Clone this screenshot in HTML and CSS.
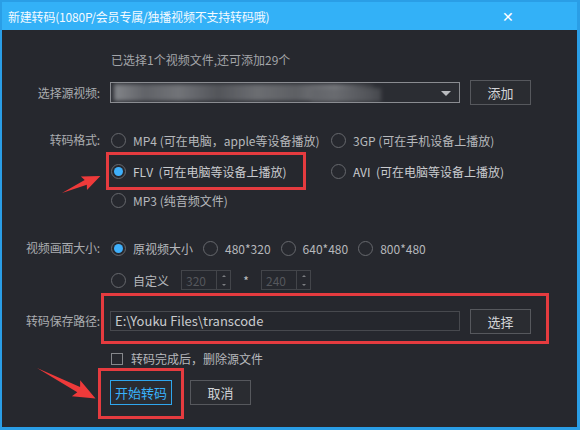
FILE: index.html
```html
<!DOCTYPE html>
<html lang="zh-CN">
<head>
<meta charset="utf-8">
<title>新建转码</title>
<link rel="stylesheet" href="styles.css">
</head>
<body>
<div class="window">
  <div class="titlebar">
    <span class="title">新建转码(1080P/会员专属/独播视频不支持转码哦)</span>
    <span class="close">✕</span>
  </div>
  <div class="content">
    <div class="info">已选择1个视频文件,还可添加29个</div>

    <div class="row row-source">
      <div class="label">选择源视频:</div>
      <div class="ctrl">
        <div class="select">
          <div class="blur"></div>
          <div class="blur blur2"></div>
          <span class="caret"></span>
        </div>
        <div class="btn">添加</div>
      </div>
    </div>

    <div class="row row-format">
      <div class="label">转码格式:</div>
      <div class="ctrl formats">
        <div class="opt w220"><span class="radio"></span><span class="otext">MP4 (可在电脑，apple等设备播放)</span></div>
        <div class="opt"><span class="radio"></span><span class="otext">3GP (可在手机设备上播放)</span></div>
        <div class="opt w220 r2"><span class="radio on"></span><span class="otext bright">FLV&nbsp; (可在电脑等设备上播放)</span></div>
        <div class="opt r2"><span class="radio"></span><span class="otext bright">AVI&nbsp; (可在电脑等设备上播放)</span></div>
        <div class="opt w220 r3"><span class="radio"></span><span class="otext">MP3 (纯音频文件)</span></div>
      </div>
    </div>

    <div class="row row-size">
      <div class="label">视频画面大小:</div>
      <div class="ctrl sizes">
        <div class="opt"><span class="radio on"></span><span class="otext">原视频大小</span></div>
        <div class="opt"><span class="radio"></span><span class="otext">480*320</span></div>
        <div class="opt"><span class="radio"></span><span class="otext">640*480</span></div>
        <div class="opt"><span class="radio"></span><span class="otext">800*480</span></div>
      </div>
    </div>

    <div class="row row-custom">
      <div class="label"></div>
      <div class="ctrl custom">
        <div class="opt"><span class="radio"></span><span class="otext">自定义</span></div>
        <div class="spin"><span class="sval">320</span><span class="arrows"><i class="up"></i><i class="down"></i></span></div>
        <span class="times">*</span>
        <div class="spin"><span class="sval">240</span><span class="arrows"><i class="up"></i><i class="down"></i></span></div>
      </div>
    </div>

    <div class="row row-path">
      <div class="label">转码保存路径:</div>
      <div class="ctrl">
        <div class="input">E:\Youku Files\transcode</div>
        <div class="btn">选择</div>
      </div>
    </div>

    <div class="row row-check">
      <div class="label"></div>
      <div class="ctrl">
        <span class="checkbox"></span><span class="otext">转码完成后，删除源文件</span>
      </div>
    </div>

    <div class="row row-buttons">
      <div class="label"></div>
      <div class="ctrl">
        <div class="btn primary">开始转码</div>
        <div class="btn">取消</div>
      </div>
    </div>
  </div>

  <div class="mark mark-flv"></div>
  <div class="mark mark-path"></div>
  <div class="mark mark-start"></div>
  <svg class="arrows-overlay" width="580" height="430" viewBox="0 0 580 430">
    <g transform="translate(62,193) rotate(-24)">
      <polygon points="0,0 26,-2.6 24,-7.5 42,0 24,7.5 26,2.6" fill="#ee3a3a"/>
    </g>
    <g transform="translate(37,368) rotate(27.5)">
      <polygon points="0,0 47,-3 44,-9 66,0 44,9 47,3" fill="#ee3a3a"/>
    </g>
  </svg>
</div>
</body>
</html>
```

FILE: styles.css
```css
* { box-sizing: border-box; }
html, body { margin: 0; padding: 0; background: #26282e; }
body {
  font-family: "Noto Sans CJK SC", "Noto Sans", sans-serif;
  font-size: 12px;
}
.window {
  position: relative;
  width: 580px;
  height: 430px;
  background: #26282e;
  border: 2px solid #2a9ee6;
  border-right-width: 3px;
  border-bottom-width: 3px;
  overflow: hidden;
}
.titlebar {
  height: 28px;
  background: #33b1f7;
  display: flex;
  align-items: center;
  justify-content: space-between;
  padding: 0 63px 0 6px;
  color: #fff;
}
.title {
  font-size: 12px;
  letter-spacing: -0.2px;
  color: #f4faff;
}
.close {
  font-size: 14px;
  color: #fff;
}
.content {
  color: #aeb0b4;
}
.info {
  margin: 22px 0 0 109px;
  height: 16px;
  line-height: 16px;
  color: #a3a5a9;
}
.row {
  display: grid;
  grid-template-columns: 98px 1fr;
  column-gap: 10px;
}
.label {
  text-align: right;
  color: #aaacb0;
  white-space: nowrap;
  letter-spacing: -0.2px;
}
.ctrl {
  display: flex;
  align-items: center;
}
.row-source { margin-top: 12px; height: 25px; }
.row-source .label { line-height: 25px; }
.select {
  position: relative;
  width: 350px;
  height: 21px;
  border: 1px solid #8a8c91;
  background: #2b2d33;
  overflow: hidden;
}
.blur {
  position: absolute;
  left: 3px;
  top: 1px;
  width: 260px;
  height: 17px;
  background: linear-gradient(90deg, #9a9ca0 0%, #6e7075 12%, #84868a 25%, #5d5f64 40%, #7c7e82 55%, #6a6c70 70%, #8f9195 85%, #3a3c41 100%);
  filter: blur(2px);
  opacity: 0.8;
}
.blur2 {
  left: 200px;
  top: 5px;
  width: 70px;
  height: 14px;
  background: #5f6166;
  opacity: 0.6;
}
.caret {
  position: absolute;
  right: 8px;
  top: 8px;
  width: 0;
  height: 0;
  border-left: 5px solid transparent;
  border-right: 5px solid transparent;
  border-top: 5px solid #b9bbbf;
}
.btn {
  width: 61px;
  height: 25px;
  margin-left: 10px;
  border: 1px solid #56585d;
  background: #2a2c31;
  color: #d2d4d7;
  font-size: 13px;
  text-align: center;
  line-height: 23px;
}
.btn.primary {
  margin-left: 0;
  border-color: #2fa6ee;
  color: #39b2fb;
  width: 62px;
}
.btn.primary + .btn { margin-left: 18px; }

.row-format { margin-top: 25px; }
.row-format .label { line-height: 20px; }
.formats {
  flex-wrap: wrap;
  align-items: flex-start;
}
.opt {
  display: flex;
  align-items: center;
  height: 20px;
}
.w220 { width: 220px; }
.opt.r2 { margin-top: 11px; }
.opt.r3 { margin-top: 9px; }
.radio {
  width: 15px;
  height: 15px;
  border: 1px solid #66686d;
  border-radius: 50%;
  position: relative;
  margin: 0 7px 0 1px;
  flex: none;
}
.radio.on::after {
  content: "";
  position: absolute;
  left: 2px;
  top: 2px;
  width: 9px;
  height: 9px;
  border-radius: 50%;
  background: #3fb0fb;
}
.otext {
  color: #b6b8bc;
  white-space: nowrap;
}
.otext.bright { color: #c9cbce; }

.row-size { margin-top: 28px; }
.row-size .label { line-height: 20px; }
.sizes .opt { margin-right: 9px; }

.row-custom { margin-top: 12px; }
.custom .opt { margin-right: 12px; }
.spin {
  width: 50px;
  height: 20px;
  border: 1px solid #43454a;
  display: flex;
  align-items: center;
  justify-content: space-between;
  padding-left: 4px;
}
.sval { color: #55575c; }
.arrows {
  width: 14px;
  height: 18px;
  border-left: 1px solid #43454a;
  display: flex;
  flex-direction: column;
  align-items: center;
  justify-content: space-around;
}
.arrows i {
  display: block;
  width: 0;
  height: 0;
  border-left: 2px solid transparent;
  border-right: 2px solid transparent;
}
.arrows .up { border-bottom: 2px solid #7c7e82; }
.arrows .down { border-top: 2px solid #7c7e82; }
.times {
  width: 30px;
  text-align: center;
  color: #c0c2c5;
}

.row-path { margin-top: 18px; height: 26px; }
.row-path .label { line-height: 26px; }
.input {
  width: 350px;
  height: 20px;
  border: 1px solid #47494e;
  background: #25272d;
  color: #c9cbce;
  font-size: 13px;
  line-height: 18px;
  padding-left: 4px;
}

.row-check { margin-top: 16px; height: 16px; }
.checkbox {
  width: 12px;
  height: 12px;
  border: 1px solid #86888c;
  margin: 0 8px 0 1px;
}
.row-buttons { margin-top: 14px; height: 25px; }

.mark {
  position: absolute;
  border: 3px solid #e53b3f;
}
.mark-flv { left: 104px; top: 150px; width: 200px; height: 38px; }
.mark-path { left: 99px; top: 291px; width: 448px; height: 51px; }
.mark-start { left: 96px; top: 366px; width: 86px; height: 51px; }
.arrows-overlay {
  position: absolute;
  left: -2px;
  top: -2px;
}
```
